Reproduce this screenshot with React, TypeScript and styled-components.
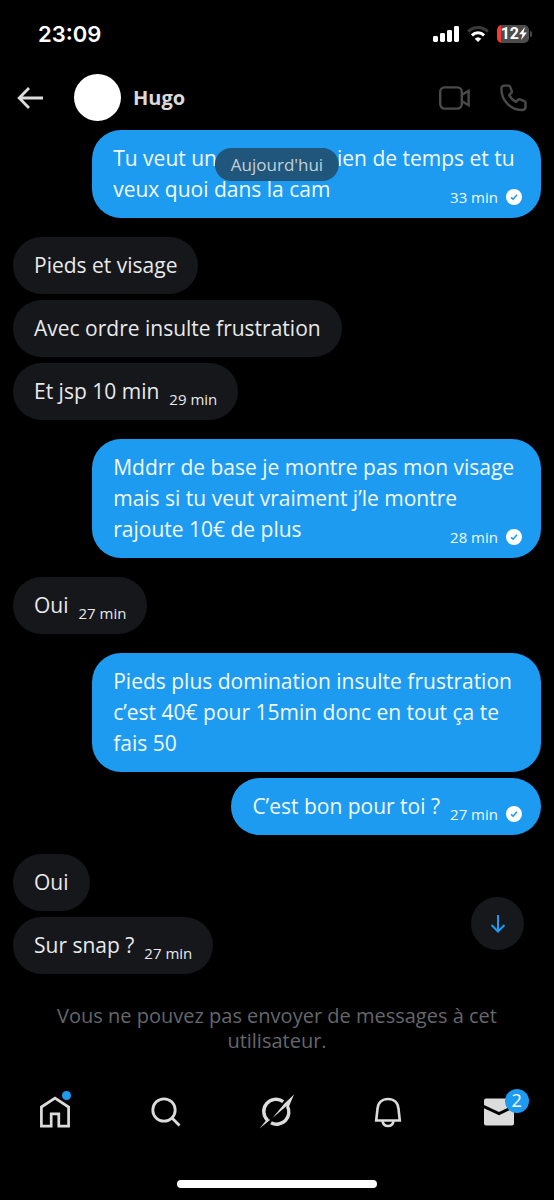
import React from 'react';
import styled, { createGlobalStyle } from 'styled-components';

const Global = createGlobalStyle`
  *, *::before, *::after { box-sizing: border-box; }
  html, body { margin: 0; background: #000; }
  body { font-family: 'Open Sans', 'Noto Sans', sans-serif; color: #e7e9ea; }
  button { font: inherit; color: inherit; background: none; border: 0; padding: 0; cursor: pointer; }
  svg { display: block; }
  h1, p { margin: 0; }
`;

const Screen = styled.div`
  display: flex;
  flex-direction: column;
  min-height: 100vh;
`;

const StatusBar = styled.div`
  display: flex;
  align-items: center;
  justify-content: space-between;
  height: 67px;
  padding: 0 22px 0 38px;
`;

const Clock = styled.time`
  font: 600 22px/28px Inter, sans-serif;
  color: #fff;
`;

const StatusIcons = styled.div`
  display: flex;
  align-items: center;
  gap: 8px;
`;

const Battery = styled.div`
  display: flex;
  align-items: center;
  gap: 1px;
`;

const BatteryBody = styled.div`
  display: flex;
  align-items: center;
  justify-content: flex-end;
  width: 32px;
  height: 18px;
  padding-right: 2px;
  border-radius: 5px;
  background: linear-gradient(90deg, #f53b33 4px, #4d4d4d 4px);
  font: 700 16px/18px Roboto, sans-serif;
  color: #fff;
`;

const BatteryTip = styled.span`
  width: 2px;
  height: 6px;
  border-radius: 0 2px 2px 0;
  background: #4d4d4d;
`;

const Header = styled.header`
  display: flex;
  align-items: center;
  height: 63px;
  padding: 0 27px 2px 17px;
`;

const Avatar = styled.div`
  width: 47px;
  height: 47px;
  margin: 0 12px 0 31px;
  border-radius: 50%;
  background: #fff;
`;

const Name = styled.h1`
  flex: 1;
  font: 700 20px/26px 'Open Sans', sans-serif;
  color: #d9d9d9;
`;

const CallActions = styled.div`
  display: flex;
  align-items: center;
  gap: 30px;
  color: #4a4a4a;
`;

const Conversation = styled.main`
  position: relative;
  display: flex;
  flex-direction: column;
  gap: 19px;
  padding: 0 13px;
`;

const DayPill = styled.div`
  position: absolute;
  top: 18px;
  left: 50%;
  transform: translateX(-50%);
  padding: 0 16px;
  border-radius: 17px;
  background: #20567b;
  font-size: 17px;
  line-height: 33px;
  color: #c3d0d9;
`;

const Group = styled.section<{ $sent?: boolean }>`
  display: flex;
  flex-direction: column;
  align-items: ${(p) => (p.$sent ? 'flex-end' : 'flex-start')};
  gap: 6px;
`;

/* Long bubbles take the full message width and share one cell between the text and its time. */
const Bubble = styled.article<{ $sent?: boolean; $long?: boolean }>`
  display: ${(p) => (p.$long ? 'grid' : 'flex')};
  gap: 10px;
  width: ${(p) => (p.$long ? '85%' : 'auto')};
  max-width: 85%;
  padding: 13px 21px;
  border-radius: 29px;
  background: ${(p) => (p.$sent ? '#1d9bf0' : '#16171a')};
  color: ${(p) => (p.$sent ? '#f2f9ff' : '#e7e9ea')};

  > * {
    grid-area: 1 / 1;
  }
`;

const Text = styled.p`
  font-size: 21px;
  line-height: 31px;
  white-space: pre-line;
`;

const Covered = styled.span`
  display: inline-block;
  width: 120px;
`;

const Meta = styled.div<{ $sent?: boolean }>`
  display: flex;
  align-items: center;
  align-self: end;
  justify-self: end;
  gap: 8px;
  margin: ${(p) => (p.$sent ? '0 -2px -2px 0' : '0 0 -2px 0')};
  font-size: 15px;
  line-height: 20px;
`;

const ScrollButton = styled.button`
  position: absolute;
  right: 30px;
  bottom: 24px;
  display: grid;
  place-items: center;
  width: 53px;
  height: 53px;
  border-radius: 50%;
  background: #16181b;
  color: #1d9bf0;
`;

const Notice = styled.p`
  padding: 29px 40px 0;
  text-align: center;
  font-size: 20px;
  line-height: 25px;
  color: #64676b;
`;

const TabBar = styled.nav`
  display: grid;
  grid-template-columns: repeat(5, 1fr);
  margin-top: auto;
  padding-bottom: 43px;
`;

const Tab = styled.button`
  position: relative;
  display: grid;
  place-items: center;
  height: 50px;
  color: #dcdcdc;
`;

const Dot = styled.span`
  position: absolute;
  top: 4px;
  left: calc(50% + 7px);
  width: 9px;
  height: 9px;
  border-radius: 50%;
  background: #1d9bf0;
`;

const Count = styled.span`
  position: absolute;
  top: 2px;
  left: calc(50% + 6px);
  width: 24px;
  height: 24px;
  border-radius: 50%;
  background: #1d9bf0;
  font-size: 18px;
  line-height: 23px;
  text-align: center;
  color: #fff;
`;

const HomeIndicator = styled.div`
  align-self: center;
  width: 36%;
  height: 8px;
  margin-bottom: 12px;
  border-radius: 4px;
  background: #fff;
`;

const Seen = () => (
  <svg width="16" height="16" viewBox="0 0 16 16" role="img" aria-label="Vu">
    <circle cx="8" cy="8" r="8" fill="#fff" />
    <path d="M5 8.3 7.1 10.2 11 5.8" fill="none" stroke="#1d9bf0" strokeWidth="1.6" />
  </svg>
);

type MessageProps = {
  sent?: boolean;
  time?: string;
  long?: boolean;
  children: React.ReactNode;
};

const Message = ({ sent, time, long, children }: MessageProps) => (
  <Bubble $sent={sent} $long={long}>
    <Text>{children}</Text>
    {time && (
      <Meta $sent={sent}>
        <time>{time}</time>
        {sent && <Seen />}
      </Meta>
    )}
  </Bubble>
);

export default function App() {
  return (
    <Screen>
      <Global />
      <StatusBar>
        <Clock>23:09</Clock>
        <StatusIcons>
          <svg width="26" height="16" viewBox="0 0 26 16" fill="#fff">
            <rect x="0" y="10" width="5" height="6" rx="1.4" />
            <rect x="7" y="7" width="5" height="9" rx="1.4" />
            <rect x="14" y="4" width="5" height="12" rx="1.4" />
            <rect x="21" y="0" width="5" height="16" rx="1.4" />
          </svg>
          <svg width="22" height="16" viewBox="0 0 22 16" fill="none" strokeWidth="3">
            <path d="M1.2 5.6a14 14 0 0 1 19.6 0" stroke="#3a3a3a" />
            <path d="M4.9 9.3a8.8 8.8 0 0 1 12.2 0" stroke="#fff" />
            <path d="M11 16 7.7 12.7a4.8 4.8 0 0 1 6.6 0z" fill="#fff" />
          </svg>
          <Battery>
            <BatteryBody>
              12
              <svg width="8" height="13" viewBox="0 0 8 13" fill="#fff">
                <path d="M6 0 0 7.2h3.5L2 13l6-7.4H4.5z" />
              </svg>
            </BatteryBody>
            <BatteryTip />
          </Battery>
        </StatusIcons>
      </StatusBar>

      <Header>
        <button aria-label="Retour">
          <svg width="26" height="24" viewBox="0 0 26 24" fill="none" stroke="#dcdcdc" strokeWidth="2.8">
            <path d="M12 2 2.2 12 12 22M2.5 12H26" />
          </svg>
        </button>
        <Avatar />
        <Name>Hugo</Name>
        <CallActions>
          <button aria-label="Appel vidéo">
            <svg width="31" height="24" viewBox="0 0 31 24" fill="none" stroke="currentColor" strokeWidth="2.4">
              <rect x="1.2" y="1.4" width="21.6" height="21.2" rx="4.5" />
              <path d="M23 8.800 29.600 4.800v14.400L23 15.200" />
            </svg>
          </button>
          <button aria-label="Appel audio">
            <svg width="27" height="28" viewBox="0 0 27 28" fill="none" stroke="currentColor" strokeWidth="2.4" strokeLinejoin="round">
              <path d="M4.4 1.6h4.2c.7 0 1.3.4 1.5 1l1.7 4.5c.2.6.1 1.2-.4 1.7L9.2 11c1.5 3.100 3.700 5.400 6.800 6.900l2.200-2.200c.5-.5 1.100-.6 1.700-.4l4.500 1.800c.7.2 1.100.8 1.100 1.500v4.200c0 1.900-1.500 3.200-3.300 3.200C10.800 26 1.400 16.500 1.400 4.900c0-1.800 1.200-3.300 3-3.300z" />
            </svg>
          </button>
        </CallActions>
      </Header>

      <Conversation>
        <Group $sent>
          <Message sent long time="33 min">
            Tu veut un<Covered />ien de temps et tu{'\n'}veux quoi dans la cam
          </Message>
        </Group>
        <Group>
          <Message>Pieds et visage</Message>
          <Message>Avec ordre insulte frustration</Message>
          <Message time="29 min">Et jsp 10 min</Message>
        </Group>
        <Group $sent>
          <Message sent long time="28 min">
            Mddrr de base je montre pas mon visage{'\n'}mais si tu veut vraiment j’le montre{'\n'}rajoute 10€ de plus
          </Message>
        </Group>
        <Group>
          <Message time="27 min">Oui</Message>
        </Group>
        <Group $sent>
          <Message sent long>
            Pieds plus domination insulte frustration{'\n'}c’est 40€ pour 15min donc en tout ça te{'\n'}fais 50
          </Message>
          <Message sent time="27 min">C’est bon pour toi ?</Message>
        </Group>
        <Group>
          <Message>Oui</Message>
          <Message time="27 min">Sur snap ?</Message>
        </Group>
        <DayPill>Aujourd'hui</DayPill>
        <ScrollButton aria-label="Aller en bas">
          <svg width="16" height="20" viewBox="0 0 16 20" fill="none" stroke="currentColor" strokeWidth="2">
            <path d="M8 1v16M1.5 11 8 17.5 14.5 11" />
          </svg>
        </ScrollButton>
      </Conversation>

      <Notice>Vous ne pouvez pas envoyer de messages à cet utilisateur.</Notice>

      <TabBar>
        <Tab aria-label="Accueil">
          <svg width="30" height="32" viewBox="0 0 30 32" fill="none" stroke="currentColor" strokeWidth="2.7">
            <path d="M1.4 11 15 2.200 28.600 11V30.200H18.800V17.800H11.200V30.200H1.400z" />
          </svg>
          <Dot />
        </Tab>
        <Tab aria-label="Rechercher">
          <svg width="30" height="30" viewBox="0 0 30 30" fill="none" stroke="currentColor" strokeWidth="2.8">
            <circle cx="13" cy="13" r="11.200" />
            <path d="m21 21 7.500 7.500" />
          </svg>
        </Tab>
        <Tab aria-label="Grok">
          <svg width="36" height="36" viewBox="0 0 36 36">
            <g fill="none" stroke="currentColor" strokeWidth="3.4">
              <path d="M8.600 26.300A12.200 12.200 0 0 1 24.200 7.600" />
              <path d="M28.300 12A12.200 12.200 0 0 1 12 28.800" />
            </g>
            <g fill="currentColor">
              <path d="M.5 34.500 7 26.500l3-1.500 1 1z" />
              <path d="M35 .5 30 12.500l-2.500-.5-14 12L25.500 9.500z" />
            </g>
          </svg>
        </Tab>
        <Tab aria-label="Notifications">
          <svg width="28" height="31" viewBox="0 0 28 31" fill="none" stroke="currentColor" strokeWidth="2.600">
            <path d="M2.200 23.500 3.500 12C4 5.500 8.300 2 14 2s10 3.500 10.500 10l1.300 11.500z" />
            <path d="M8.500 24c.5 3.300 2.700 5 5.500 5s5-1.700 5.500-5" />
          </svg>
        </Tab>
        <Tab aria-label="Messages, 2 non lus">
          <svg width="30" height="28" viewBox="0 0 30 28" fill="currentColor">
            <path d="M0 7V2.500Q0 .5 2 .5h26q2 0 2 2V7l-15 7z" />
            <path d="M0 10.200 15 17.200l15-7V25.500q0 2-2 2H2q-2 0-2-2z" />
          </svg>
          <Count>2</Count>
        </Tab>
      </TabBar>
      <HomeIndicator />
    </Screen>
  );
}
